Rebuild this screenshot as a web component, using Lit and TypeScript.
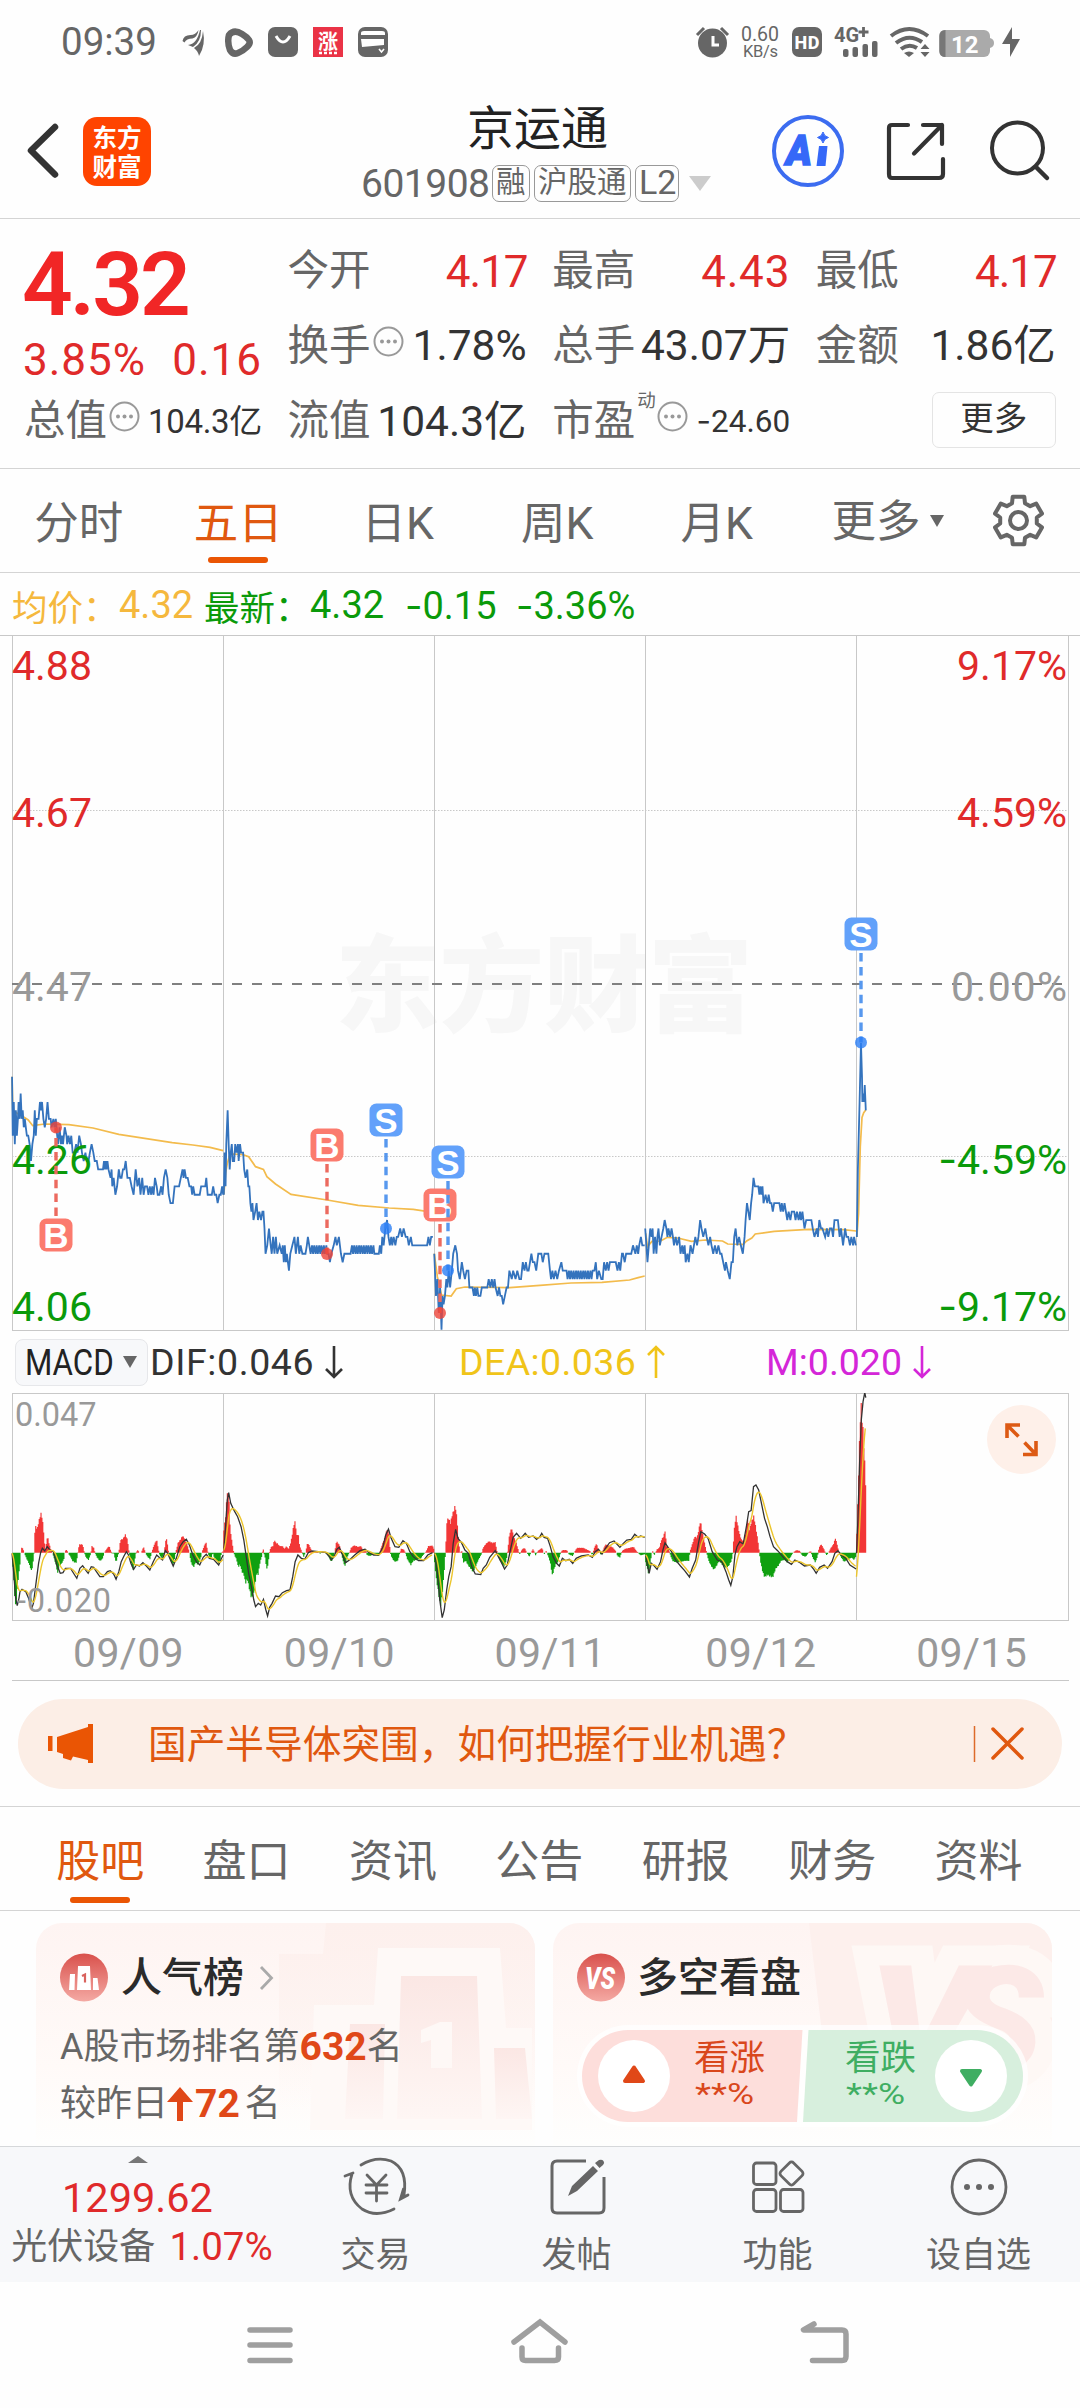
import { LitElement, html, svg, css } from "lit";
import { customElement } from "lit/decorators.js";

type Pt = [number, number];
const pairs = (s: string): Pt[] => s.trim().split(/\s+/).map((p) => p.split(",").map(Number) as Pt);

/* Series are stored on a fine grid: GX units per pixel across, GY units per pixel down. */
const GX = 2.9037;
const GY = 3;
const HALF = 540 * GX;
const join = (left: string, right: string): Pt[] => [
  ...pairs(left),
  ...pairs(right).map(([x, y]) => [x + HALF, y] as Pt),
];
/* alternating ticks between two neighbouring prices */
const osc = (from: number, to: number, lo: number, step = 4) => {
  let out = "";
  for (let x = from, i = 0; x < to; x += i % 3 === 0 ? step : step - 0.8, i++) out += ` ${x.toFixed(1)},${lo + (i % 2)}`;
  return out;
};

/* price in cents per tick, one list for each trading day */
const PRICE: Pt[][] = [
  pairs(`35,436 37,429 40,433 43,428 46,432 49,429 52,431 54,433 57,431 60,434 63,431 66,432 69,430 72,431 75,430 78,429 82,429 86,428 90,426 94,428 98,429 101,432 104,429 107,431 112,431 116,433 119,432 122,433 126,431 130,430 134,431 138,433 142,431 147,431 150,430 155,431 158,430 162,431 166,429 169,428 173,430 177,428 180,429 183,428 188,430 193,429 195,428 199,429 203,428 207,429 211,427 216,427 221,428 225,427 230,429 235,428 238,427 243,426 248,427 252,426 257,426 261,427 266,428 271,427 275,426 281,426 285,425 299,425 302,426 304,425 307,426 309,425 312,426 315,425 321,424 324,425 326,423 330,424 335,422 340,423 345,425 349,424 353,424 357,425 361,425 365,426 370,424 377,424 382,423 388,422 394,425 399,423 404,424 408,422 413,424 417,422 421,423 427,423 431,422 435,423 439,422 442,423 446,422 450,424 455,423 458,422 463,422 468,423 472,422 476,424 481,425 486,424 490,422 495,421 502,421 507,423 520,423 525,424 530,425 533,424 536,425 540,424 545,424 550,423 555,423 558,422 561,423 565,422 580,422 584,423 596,423 599,424 603,422 615,422 619,423 623,422 628,422 632,421 637,422 641,422 645,423 648,422`),
  pairs(`650,422 652,427 655,423 657,428 661,432 664,428 667,425 670,427 673,428 676,426 680,426 683,428 687,427 691,428 693,426 697,428 700,427 706,427 709,425 713,424 718,425 721,423 724,423 727,421 730,420 733,421 736,419 741,420 745,421 749,419 753,420 758,419 762,420 765,420 768,418 771,415 776,416 781,418 786,416 789,415 793,417 797,415 801,417 805,415 812,416 818,415 821,416 824,414 827,416 830,414 833,415 839,413 843,415 849,416 855,417 859,415 865,417 869,415 873,416 878,415 887,415 891,416 894,417 898,416 ${osc(902, 948, 415)} 950,415 954,415 958,414 962,415 969,416 974,417 978,416 984,417 990,415 995,414 1000,415 1015,415 ${osc(1018, 1085, 415)} 1087,415 1100,415 1103,416 1107,415 1110,417 1114,416 1119,418 1124,419 1128,417 1132,416 1136,417 1139,416 1143,417 1148,416 1152,417 1156,417 1162,418 1167,417 1172,418 1178,417 1183,417 1187,416 1193,417 1197,416 1203,416 1240,416 1244,417 1248,416 1252,417 1257,417`),
  join(`1261,415 1266,410 1270,412 1274,408 1278,411 1282,406 1285,410 1288,409 1292,410 1296,412 1299,411 1303,413 1307,411 1312,413 1316,415 1322,416 1327,415 1330,413 1335,412 1341,414 1345,413 1350,412 1355,413 1360,413 1363,411 1372,411 1376,410 1379,411 1382,410 1386,411 1389,410 1395,410 1399,411 1415,411 1419,412 1424,411 1428,412 1432,411 1436,412 1439,411 1445,410 1449,411 1453,410 1457,410 1461,409 1466,410 1471,411 1475,411 1479,413 1486,412 1490,413 1497,412 1502,413 1508,412 1513,412 1518,414 1523,413 1527,414 1531,413 1535,413 1543,415 1547,414 1552,414 1557,413 1563,415`,
    `4,415 8,414 13,415 18,415 24,415 29,413 32,412 36,413 40,412 45,413 50,412 55,413 62,414 66,413 77,413 ${osc(80, 155, 412)} 158,413 162,414 166,412 171,413 178,412 182,412 186,414 191,413 195,414 199,413 203,414 220,414 225,413 229,414 233,413 238,415 241,415 246,414 250,415 265,415 270,416 277,415 281,416 285,415 288,416 293,417 297,416 304,416`),
  join(`${HALF + 305.5},418`,
    `309,416 312,414 316,416 320,418 324,417 327,418 330,415 334,417 338,415 341,417 344,418 348,416 353,417 358,418 362,419 367,418 370,417 373,418 378,417 382,418 386,417 389,416 394,417 398,416 404,417 408,415 413,416 416,415 420,416 423,414 428,415 432,414 437,416 443,415 447,416 451,417 456,416 460,417 465,419 469,418 474,417 480,418 484,417 489,416 494,417 498,416 503,415 508,416 513,415 518,416 523,415 527,415 532,414 537,413 540,414 545,413 551,412 556,414 560,414 564,417 568,418 573,416 578,417 583,416 589,415 594,417 597,419 601,421 605,420 609,419 613,421 616,422 620,424 624,423 634,423 637,422 640,423 643,422 646,423 649,421 655,422 660,421 664,422 668,421 672,421 676,420 680,421 695,421 699,420 702,421 706,420 710,421 714,420 718,419 722,420 727,419 731,420 738,420 742,419 746,420 751,419 755,420 758,419 762,420 765,419 768,418 773,419 788,419 792,418 797,417 804,418 807,417 811,419 816,418 820,418 828,417 833,418 837,417 842,418 847,418 851,417 855,419 865,419 870,417 874,418 880,416 886,418 890,417 895,417 900,416 904,417 909,416 912,417 917,416`),
  join(`${HALF + 920},417`, `923,425 928,433 932,440 935,436 936,433 939,434 941,433 943,435 946,432`),
];

const AVERAGE: Pt[][] = [
  pairs(`35,590 37,690 50,700 70,712 82,720 95,737 130,732 200,734 270,744 345,763 500,788 560,795 610,802 648,812`),
  pairs(`650,943 655,880 660,850 668,822 705,824 722,830 742,860 765,868 775,890 800,912 845,943 950,960 1040,976 1130,984 1200,988 1258,997`),
  join(`1261,1121 1270,1190 1282,1245 1310,1248 1325,1226 1350,1221 1480,1223 1568,1216`, `90,1209 180,1207 260,1200 285,1193 304,1188`),
  join(`${HALF + 307},1060`, `312,1100 325,1084 350,1083 370,1072 400,1074 440,1084 480,1080 530,1083 545,1092 590,1093 600,1083 615,1074 625,1062 680,1054 780,1048 880,1049 918,1053`),
  join(`${HALF + 920},1071`, `925,1000 930,800 935,712 940,698 946,690`),
];

const HIST: Pt[][] = [
  pairs(`35,0 38,-50 42,-120 45,-165 49,-130 53,-80 58,-35 61,8 64,18 68,8 72,-5 78,-20 83,-30 88,-45 92,-58 96,-30 99,0 101,60 103,82 108,72 112,92 116,110 120,122 124,95 128,50 131,0 135,30 138,52 142,30 147,12 152,0 156,-12 162,-35 168,-65 172,-40 178,-35 185,-22 188,0 192,10 197,2 200,-5 205,-12 210,-25 217,-30 222,-30 226,0 230,25 240,25 245,0 250,-15 257,-22 262,-8 264,0 267,20 272,15 276,0 282,-15 290,-25 297,-20 303,0 310,12 317,20 322,5 326,-3 330,0 337,-30 342,-10 345,0 350,40 357,42 364,55 370,40 375,0 380,-25 387,-55 391,-25 395,0 400,8 405,0 410,0 417,18 422,0 428,-12 436,-20 440,0 448,25 455,40 460,10 463,-5 470,-18 476,-5 479,20 483,48 487,20 491,-10 498,-30 504,-35 510,0 517,30 524,40 530,52 537,42 545,20 550,0 555,-30 562,-45 568,-30 575,-38 583,-15 586,0 592,18 598,33 602,10 606,-8 612,-20 618,0 622,-15 628,-20 634,-32 640,-20 643,0 648,5`),
  pairs(`650,70 655,110 660,188 665,170 668,80 672,45 678,5 682,-10 687,-20 692,-45 697,-35 703,-60 708,-65 713,-95 718,-80 724,-110 730,-138 736,-130 740,-110 745,-60 749,-70 755,-30 760,-12 764,15 766,0 770,-15 774,-50 778,-40 782,0 787,18 793,20 797,40 801,30 806,28 812,20 820,20 826,12 832,20 838,10 843,25 848,50 853,85 857,95 862,50 866,60 870,20 876,5 882,-12 887,0 893,30 899,20 905,5 920,5 930,-3 940,3 950,-5 956,-15 962,-28 968,-15 972,0 977,35 981,30 987,20 992,-5 997,-28 1002,-42 1008,-15 1014,0 1020,15 1028,22 1040,18 1048,20 1054,8 1062,8 1066,-8 1075,-10 1090,-3 1098,-12 1104,5 1110,25 1117,45 1124,72 1129,65 1133,0 1138,-15 1146,-28 1155,-25 1160,-5 1165,12 1172,10 1177,0 1183,-20 1193,-38 1200,-25 1210,-22 1220,-20 1230,-5 1238,5 1244,20 1256,22 1260,10`),
  join(`1262,-30 1267,-80 1273,-120 1279,-165 1284,-130 1288,-80 1292,-25 1295,30 1298,100 1303,105 1308,90 1313,115 1318,130 1322,145 1327,105 1332,30 1336,0 1341,5 1345,-30 1353,-25 1360,-40 1368,-50 1374,-60 1382,-40 1390,-20 1398,-5 1403,15 1412,28 1420,35 1430,30 1438,32 1443,5 1448,-15 1456,-30 1464,-42 1470,-25 1474,5 1480,60 1486,75 1491,50 1498,35 1503,15 1509,-5 1516,10 1523,15 1530,0 1537,-12 1542,0 1548,12 1555,-8 1562,5 1568,10`,
    `6,15 12,-5 18,5 24,-10 30,-30 36,-70 41,-50 46,-35 52,-30 60,0 65,8 78,8 84,-5 95,-10 102,5 108,15 125,15 135,10 145,5 152,-8 158,15 164,28 170,8 176,-5 182,5 190,25 200,22 212,15 220,5 225,-10 232,-15 238,5 248,12 262,15 272,18 280,5 292,-8 304,-5`),
  join(`${HALF + 307},-30`, `312,-50 316,-68 322,-20 326,8 332,-8 340,10 347,15 353,40 359,50 363,68 368,20 373,15 378,-5 385,-25 395,-30 410,-28 420,-25 432,-25 436,5 442,25 450,50 456,45 461,70 466,98 472,60 478,30 484,0 490,-25 497,-40 505,-52 513,-40 520,-25 528,-35 537,-45 547,-42 556,-25 560,0 564,70 569,115 574,85 580,55 585,40 592,35 598,70 603,105 608,70 614,95 621,112 627,75 633,35 637,0 641,-30 646,-55 652,-75 660,-68 668,-72 676,-75 684,-50 692,-40 700,-25 710,-22 718,-30 726,-15 735,0 745,8 755,5 762,-10 772,-12 780,0 786,5 792,-15 800,-30 806,-10 811,18 817,25 824,12 832,-8 838,0 845,15 852,25 858,45 864,20 868,0 875,-15 883,-28 895,-20 905,-15 912,-22 918,-10`),
  join(`${HALF + 920},60`, `923,160 926,280 929,380 932,460 936,400 938,375 942,300 946,200`),
];

const DIF: Pt[][] = [
  pairs(`35,700 40,760 45,830 50,857 55,835 58,815 64,808 75,815 83,835 92,866 97,850 102,810 107,770 112,730 118,698 123,685 130,693 137,680 145,690 155,695 165,735 175,760 183,758 190,745 205,745 215,762 223,775 232,745 240,737 250,752 256,760 265,740 272,742 280,755 290,770 300,770 312,755 320,752 330,762 337,778 345,755 352,725 360,708 367,695 373,705 380,730 388,748 396,735 405,738 415,728 425,738 435,750 445,725 455,705 465,715 472,720 480,692 487,700 495,720 503,738 512,715 522,680 532,665 541,658 550,675 560,705 570,725 580,735 590,712 599,703 608,715 620,718 635,735 640,722 648,705`),
  pairs(`650,690 655,620 660,540 664,518 670,550 680,572 690,590 700,620 708,660 715,710 722,760 730,800 737,840 742,860 750,850 757,855 765,838 772,870 777,888 783,862 790,850 800,828 810,830 820,818 832,812 842,810 850,770 857,725 865,705 875,715 885,718 895,698 905,693 925,695 945,697 955,708 962,720 970,710 978,688 985,682 995,705 1003,728 1015,720 1030,705 1045,692 1060,688 1070,697 1085,705 1100,705 1112,680 1120,645 1128,627 1136,655 1147,680 1158,682 1170,662 1180,670 1190,695 1200,710 1215,722 1230,722 1242,705 1256,698`),
  join(`1262,700 1270,760 1277,840 1284,893 1290,870 1297,810 1303,770 1310,740 1316,670 1323,628 1330,655 1340,668 1350,690 1360,700 1370,740 1380,762 1396,764 1403,745 1412,735 1422,712 1438,692 1447,710 1458,732 1465,747 1473,735 1482,690 1490,652 1500,640 1512,655 1525,640 1535,652 1548,648 1558,658 1568,650`,
    `5,640 12,652 22,655 30,680 38,710 48,730 56,738 65,715 75,722 85,718 95,730 105,715 120,708 140,705 152,712 160,695 170,688 180,702 190,685 202,668 215,663 232,682 242,670 252,660 265,658 275,643 285,652 292,648 304,652`),
  join(`${HALF + 307},705`, `312,735 317,760 323,730 332,738 340,748 350,725 357,690 363,668 372,682 382,695 395,722 408,738 420,752 434,771 442,745 452,720 460,670 467,635 478,642 488,655 500,695 515,720 528,725 540,755 548,780 554,796 560,770 566,705 572,680 580,665 590,672 600,615 606,575 613,572 620,500 627,495 635,510 642,545 652,595 660,620 668,650 678,680 690,692 705,710 718,725 730,733 740,720 755,728 768,738 785,735 795,748 802,760 812,742 825,735 835,745 848,725 856,700 865,692 875,705 888,715 900,735 918,747`),
  join(`${HALF + 919},700`, `923,600 928,430 933,300 938,245 943,218 946,233`),
];

const MINUTE = 2.55;
const sample = (pts: Pt[]): Pt[] => {
  const out: Pt[] = [];
  let i = 0;
  for (let x = pts[0][0]; x <= pts[pts.length - 1][0]; x += MINUTE) {
    while (i < pts.length - 2 && pts[i + 1][0] < x) i++;
    const [x0, y0] = pts[i];
    const [x1, y1] = pts[i + 1];
    out.push([x, y0 + ((y1 - y0) * (x - x0)) / (x1 - x0 || 1)]);
  }
  return out;
};
const ZERO = 698;
const deaOf = (pts: Pt[], start: number): Pt[] => {
  let v = start;
  return sample(pts).map(([x, y]) => {
    v += (y - v) * 0.22;
    return [x, v] as Pt;
  });
};
const poly = (pts: Pt[]) => pts.map(([x, y]) => `${x.toFixed(1)},${y.toFixed(1)}`).join(" ");
const bars = (pts: Pt[], up: boolean) =>
  sample(pts)
    .map(([x, v], i) => [x, v * (i % 2 ? 1 : 0.95)] as Pt)
    .filter(([, v]) => (up ? v > 1 : v < -1))
    .map(([x, v]) => `M${x.toFixed(1)} ${ZERO}V${(ZERO - v).toFixed(1)}`)
    .join("");

const VLINES = [12.5, 223.5, 434.5, 645.5, 856.5, 1068.5];

@customElement("price-chart")
class PriceChart extends LitElement {
  static styles = css`
    :host { display: block; height: 696px; }
    svg { display: block; font-family: Roboto, "Noto Sans CJK SC", sans-serif; }
    .ax { font-size: 41px; }
    .neg { font-family: Inter, sans-serif; }
    .up { fill: #e02a2a; } .down { fill: #0a9a0a; } .flat { fill: #999; }
    .wm { font-family: "Noto Sans CJK SC", sans-serif; font-weight: 900; font-size: 105px; fill: #f7f7f7; }
    .tag { font-weight: 700; font-size: 35px; fill: #fff; text-anchor: middle; font-family: "Liberation Sans", sans-serif; }
    .grid { stroke: #c8c8c8; stroke-width: 1; fill: none; }
    .px { fill: none; stroke: #3473bd; stroke-width: 1.8; stroke-linejoin: miter; vector-effect: non-scaling-stroke; }
    .avg { fill: none; stroke: #f3bb4c; stroke-width: 1.7; vector-effect: non-scaling-stroke; }
  `;
  private mark(kind: "B" | "S", x: number, boxY: number, dotY: number) {
    const b = kind === "B";
    const box = b ? "#fb7b6e" : "#62a1fa";
    const line = b ? "#ec6a5f" : "#5798ee";
    const dot = b ? "#ee4438" : "#2a7ef5";
    const above = boxY < dotY;
    return svg`
      <line x1=${x} x2=${x} y1=${above ? boxY + 19 : boxY - 19} y2=${dotY} stroke=${line} stroke-width="3.4" stroke-dasharray="8.5 5.4"></line>
      <circle cx=${x} cy=${dotY} r="6" fill=${dot} fill-opacity=".8"></circle>
      <rect x=${x - 16.5} y=${boxY - 16.5} width="33" height="33" rx="7" fill=${box}></rect>
      <text class="tag" x=${x} y=${boxY + 12.5}>${kind}</text>`;
  }
  render() {
    const toY = (c: number) => 590 + (436 - c) * 25.3;
    return html`<svg width="1080" height="696" viewBox="0 635 1080 696">
      <text class="wm" x="335" y="1023" textLength="418">东方财富</text>
      ${VLINES.map((x) => svg`<path class="grid" d="M${x} 635V1331"></path>`)}
      <path class="grid" d="M0 635.5H1080M12 1330.5H1069"></path>
      <path class="grid" stroke-dasharray="1.5 1.5" d="M12 810.5H1068M12 1156.5H1068"></path>
      <path d="M12 984H1068" stroke="#808080" stroke-width="1.8" stroke-dasharray="10 10"></path>
      <g transform=${`translate(0 880) scale(${1 / GX} ${1 / GY})`}>
        ${AVERAGE.map((a) => svg`<polyline class="avg" points=${poly(a)}></polyline>`)}
        ${PRICE.map((d) => svg`<polyline class="px" points=${poly(d.map(([x, c]) => [x, toY(c)] as Pt))}></polyline>`)}
      </g>
      <g class="ax">
        <text class="up" x="12" y="680">4.88</text><text class="up" x="1067" y="680" text-anchor="end">9.17%</text>
        <text class="up" x="12" y="827">4.67</text><text class="up" x="1067" y="827" text-anchor="end">4.59%</text>
        <text class="flat" x="12" y="1000.5">4.47</text><text class="flat" x="1067" y="1000.5" text-anchor="end" textLength="116">0.00%</text>
        <text class="down" x="12" y="1174">4.26</text><text class="down" x="1067" y="1174" text-anchor="end"><tspan class="neg">-</tspan>4.59%</text>
        <text class="down" x="12" y="1320.5">4.06</text><text class="down" x="1067" y="1320.5" text-anchor="end"><tspan class="neg">-</tspan>9.17%</text>
      </g>
      ${this.mark("B", 56, 1235, 1127.5)}
      ${this.mark("B", 327, 1145, 1254)}
      ${this.mark("S", 386, 1120, 1228.5)}
      ${this.mark("B", 440, 1205, 1313)}
      ${this.mark("S", 448, 1162, 1270.5)}
      ${this.mark("S", 861, 934, 1042.5)}
    </svg>`;
  }
}

@customElement("macd-chart")
class MacdChart extends LitElement {
  static styles = css`
    :host { display: block; height: 228px; }
    svg { display: block; font-family: Roboto, sans-serif; }
    text { font-size: 32.5px; fill: #999; }
    .grid { stroke: #c8c8c8; stroke-width: 1; fill: none; }
    .r { stroke: #f23636; stroke-width: 3.4; }
    .g { stroke: #10a010; stroke-width: 3.4; }
    .dif { fill: none; stroke: #333; stroke-width: 1.3; vector-effect: non-scaling-stroke; }
    .dea { fill: none; stroke: #ecc52c; stroke-width: 1.4; vector-effect: non-scaling-stroke; }
  `;
  render() {
    return html`<svg width="1080" height="228" viewBox="0 1393 1080 228">
      ${VLINES.map((x) => svg`<path class="grid" d="M${x} 1393V1621"></path>`)}
      <path class="grid" d="M12 1393.5H1069M12 1620.5H1069"></path>
      <g transform=${`translate(0 1320) scale(${1 / GX} ${1 / GY})`}>
        ${HIST.map((h) => svg`<path class="r" d=${bars(h, true)}></path><path class="g" d=${bars(h, false)}></path>`)}
        ${DIF.map((d) => svg`<polyline class="dif" points=${poly(d)}></polyline>`)}
        ${DIF.map((d, i) => svg`<polyline class="dea" points=${poly(deaOf(d, i === 4 ? 790 : d[0][1]))}></polyline>`)}
      </g>
      <text x="15" y="1425.5">0.047</text>
      <text x="17" y="1611.5" textLength="94">-0.020</text>
      <circle cx="1021.5" cy="1439.5" r="34.5" fill="#fef0e9"></circle>
      <path d="M1007 1438V1425H1020M1007.500 1425.500 1018.500 1436.500M1036 1441V1454.500H1023M1036 1454.500 1024.500 1442.500" fill="none" stroke="#dd5a14" stroke-width="3.6"></path>
    </svg>`;
  }
}

/* icon whose viewBox uses screen coordinates */
const ico = (cls: string, x: number, y: number, w: number, h: number, body: unknown) =>
  html`<svg class=${cls} width=${w} height=${h} viewBox="${x} ${y} ${w} ${h}">${body}</svg>`;
const dots = () => html`<svg class="dots" width="31" height="31" viewBox="0 0 31 31"><circle cx="15.500" cy="15.500" r="14" fill="none" stroke="#999" stroke-width="2"></circle><g fill="#999"><circle cx="9" cy="15.500" r="2"></circle><circle cx="15.500" cy="15.500" r="2"></circle><circle cx="22" cy="15.500" r="2"></circle></g></svg>`;

const gear = () => {
  const cx = 1018.5, cy = 520.5;
  const p: string[] = [];
  for (let k = 0; k < 6; k++) {
    const a = (k * 60 - 90) * (Math.PI / 180);
    for (const [da, r] of [[-0.36, 18.5], [-0.24, 24.5], [0.24, 24.5], [0.36, 18.5]] as Pt[])
      p.push(`${(cx + r * Math.cos(a + da)).toFixed(1)} ${(cy + r * Math.sin(a + da)).toFixed(1)}`);
  }
  return ico("", 990, 492, 57, 57, svg`<path d=${"M" + p.join("L") + "Z"} fill="none" stroke="#666" stroke-width="4" stroke-linejoin="round"></path><circle cx=${cx} cy=${cy} r="8.500" fill="none" stroke="#666" stroke-width="4"></circle>`);
};

@customElement("app-root")
class AppRoot extends LitElement {
  static styles = css`
    :host { display: block; width: 1080px; height: 2408px; overflow: hidden; background: #fefefe; color: #333; font-family: Roboto, "Noto Sans CJK SC", sans-serif; }
    * { box-sizing: border-box; }
    svg { display: block; flex: none; }
    .row { display: flex; align-items: center; white-space: nowrap; }
    .red { color: #e02a2a; } .grey { color: #666; }
    .neg { font-family: Inter, sans-serif; }

    .status { height: 84px; padding: 0 0 0 61px; color: #666; }
    .time { font-size: 38.5px; line-height: 44px; width: 121px; }
    .si { margin-right: 14px; }
    .sr { margin-left: auto; margin-right: 58px; }

    .head { height: 135px; border-bottom: 1px solid #d4d4d4; }
    .back { margin-left: 24px; }
    .logo { width: 68px; height: 69px; margin-left: 21px; border-radius: 14px; background: #ff4400; color: #fff; display: grid; place-content: center; text-align: center; font: 700 24.500px/29px "Noto Sans CJK SC", sans-serif; }
    .center { flex: 1; display: flex; flex-direction: column; padding: 5px 0 0 210px; }
    .name { font-size: 47px; line-height: 56px; color: #222; padding-left: 106px; margin-top: -1px; }
    .code { height: 44px; margin-top: 5px; color: #666; }
    .num { font-size: 39px; line-height: 44px; width: 131px; letter-spacing: -0.5px; }
    .tag { height: 37px; border: 1.5px solid #999; border-radius: 7px; font-size: 29.5px; line-height: 33px; margin-right: 4.500px; padding: 0 3px; }
    .tag.l2 { font-size: 34px; padding: 0 2px 0 3px; }
    .tri { width: 0; height: 0; border: 11px solid transparent; border-top: 15px solid #ccc; border-bottom: 0; margin-left: 5px; }
    .acts { gap: 35px; margin-right: 26px; height: 135px; }

    .quote { height: 250px; border-bottom: 1px solid #d4d4d4; padding: 15px 24px 0 25px; display: grid; grid-template-columns: 237px 238px 237px 239px; column-gap: 26.6px; grid-template-rows: 74px 75px 76px; }
    .q { display: flex; align-items: center; justify-content: space-between; white-space: nowrap; }
    .lab { font-size: 41.500px; color: #666; display: flex; align-items: center; line-height: 60px; margin-left: -1px; }
    .dots { margin: -9px 0 0 2px; }
    .v { font-size: 44px; line-height: 60px; padding-top: 1px; }
    .v.k { letter-spacing: -1px; margin-right: -1px; }
    .v.w { letter-spacing: .8px; }
    .v.m { font-size: 42.500px; }
    .v.s { font-size: 33px; letter-spacing: -.3px; } .v.xs { font-size: 31.500px; }
    .big { grid-row: span 2; }
    .price { font-size: 89px; font-weight: 600; line-height: 90px; color: #f12626; margin: 6px 0 0 -3px; letter-spacing: -3px; }
    .chg { display: flex; justify-content: space-between; font-size: 44px; line-height: 50px; margin: 5px 0 0 -2px; letter-spacing: 1px; }
    .sup { font-size: 18.500px; line-height: 20px; margin: -40px 0 0 2px; width: 18px; }
    .more { width: 124px; height: 56px; border: 1.500px solid #e4e4e4; border-radius: 7px; font-size: 33.500px; line-height: 51px; text-align: center; margin: -3px 0 0 auto; }

    .ptabs { height: 104px; border-bottom: 1px solid #d4d4d4; font-size: 44.500px; color: #666; }
    .pt { width: 159.500px; height: 103px; display: flex; flex-direction: column; align-items: center; justify-content: flex-end; }
    .pt span { line-height: 60px; }
    .bar { width: 60px; height: 6px; border-radius: 3px; margin: 3px 0 9px; }
    .on { color: #e0580f; } .on .bar { background: #ea5504; }
    .ptabs .pt { margin-left: -1px; margin-right: 1px; }
    .pmore { margin-left: 34px; line-height: 60px; padding-top: 2px; }
    .t2 { width: 0; height: 0; border: 7.500px solid transparent; border-top: 12px solid #666; border-bottom: 0; margin: 0 46px 0 9px; }

    .legend { height: 62px; padding: 2px 0 0 12px; font-size: 38px; color: #0a9a0a; }
    .legend i { font-style: normal; font-size: 35.500px; }
    .avgc { color: #f5b83d; }

    .mrow { height: 62px; padding-left: 15px; font-size: 37.500px; }
    .mbtn { width: 133px; height: 47px; border: 1.500px solid #e6e7ea; border-radius: 8px; background: #f7f8fa; padding-left: 9px; display: flex; align-items: center; color: #222; }
    .mbtn span { transform: scaleX(.835); transform-origin: 0 50%; width: 98px; }
    .t3 { border: 7.500px solid transparent; border-top: 12px solid #666; border-bottom: 0; }
    .dates { height: 60px; margin: 0 11px 0 12px; padding-left: 11px; border-bottom: 1px solid #c8c8c8; display: grid; grid-template-columns: repeat(5, 210.800px); font-size: 41px; line-height: 64px; color: #999; letter-spacing: .4px; }
    .dates span { width: 211px; text-align: center; }

    .banner { height: 90px; margin: 18px 18px 17px; border-radius: 45px; background: #fceee6; color: #e0580f; font-size: 38.700px; }
    .btext { margin-left: 52px; width: 822px; line-height: 56px; padding-top: 1px; }
    .dtabs { height: 105px; padding: 0 27px; border-top: 1px solid #d4d4d4; border-bottom: 1px solid #d4d4d4; font-size: 44px; color: #666; }
    .dtabs .pt { width: 146.400px; }
    .dtabs .bar { margin: 5px 0 7px; }

    .cards { height: 235px; padding: 12px 28px 0 36px; display: flex; gap: 18px; overflow: hidden; }
    .card { width: 499px; height: 260px; border-radius: 26px; background: linear-gradient(#fef4f2, #fffaf8 55%, #fefefd 85%); position: relative; overflow: hidden; }
    .deco { position: absolute; inset: 0; }
    .cin { position: relative; padding: 26px 24px 0; }
    .ct { font-size: 41px; font-weight: 500; color: #2b2b2b; margin-left: 13px; line-height: 56px; padding-top: 1px; }
    .ln { font-size: 36px; line-height: 50px; height: 50px; color: #666; }
    .ln b { color: #e04818; font-size: 39px; }
    .pill { margin: 18px 0 0 -1px; }
    .pill text { font-size: 35.500px; }

    .foot { height: 136px; background: #f7f8fa; border-top: 1px solid #d6d8da; display: grid; grid-template-columns: 275px repeat(4, 201px); }
    .idx { display: flex; flex-direction: column; align-items: center; }
    .up3 { border: 10.500px solid transparent; border-bottom: 7px solid #777; border-top: 0; margin-top: 9px; }
    .i1 { font-size: 41.500px; line-height: 48px; margin-top: 11px; }
    .i2 { font-size: 36px; line-height: 50px; color: #666; display: flex; align-items: center; gap: 14px; margin-left: 9px; }
    .i2 b { font-weight: 400; font-size: 38.500px; }
    .fi { display: flex; flex-direction: column; align-items: center; color: #666; font-size: 35px; line-height: 50px; }
    .fi svg { margin: 7px 0 11px; }
    .nav { height: 126px; }
  `;

  render() {
    const tab = (t: string, on = false) => html`<div class="pt ${on ? "on" : ""}"><span>${t}</span><div class="bar"></div></div>`;
    const neg = html`<span class="neg">-</span>`;
    const arrow = (up: boolean, c: string, ml: number) =>
      html`<svg width="20" height="34" viewBox="0 0 20 34" style="margin-left:${ml}px"><path d=${up ? "M10 33V2M2 10 10 2 18 10" : "M10 1V32M2 24 10 32 18 24"} fill="none" stroke=${c} stroke-width="2.600"></path></svg>`;
    return html`
      <div class="status row">
        <span class="time">09:39</span>
        ${ico("si", 182, 26, 28, 32, svg`<path fill="#666" d="M182.500 41q1-6 8-6 5 0 8-5-1 7-6 8.500-6 0-8 4zM188 45q9-1 12-15h1q0 12-8 17zM199 56q-1-5-5-8 8-4 9-17 3 14-4 25z"></path>`)}
        ${ico("si", 223, 26, 30, 32, svg`<path fill="none" stroke="#666" stroke-width="6.500" stroke-linejoin="round" d="M228 35q5-6 13-1 5 3 7 6 2 3-2 7-4 4-9 6-5 2-8-3-3-8-1-15z"></path>`)}
        ${ico("si", 268, 26, 31, 32, svg`<rect x="268" y="27" width="30" height="30" rx="7" fill="#666"></rect><path d="M276 36q7 12 14 0" fill="none" stroke="#fff" stroke-width="3"></path>`)}
        ${ico("si", 313, 26, 31, 32, svg`<rect x="313" y="27" width="30" height="30" fill="#ea3346"></rect><text x="318" y="49" font-size="20" font-weight="700" fill="#fff">涨</text><path d="M319 53H338" stroke="#fff" stroke-width="2.500" stroke-dasharray="3 2"></path>`)}
        ${ico("si", 358, 26, 31, 32, svg`<rect x="358" y="27" width="30" height="30" rx="7" fill="#666"></rect><path fill="#fff" d="M361 35v-2q0-2 3-2h18q3 0 3 2v2zM361 39h23v6l-22 2z"></path><path d="M379 49l2.500 3 2.500-3" fill="none" stroke="#fff" stroke-width="1.600"></path>`)}
        ${ico("sr", 695, 24, 327, 36, svg`
          <g fill="#666"><circle cx="712.500" cy="43" r="14.500"></circle><path d="M697 35l7-7M728 35l-7-7" stroke="#666" stroke-width="3"></path><path d="M713 36v9h6" stroke="#fff" stroke-width="3" fill="none"></path>
          <text x="741" y="41" font-size="19.500" textLength="38">0.60</text><text x="743" y="57" font-size="16.500" textLength="35">KB/s</text>
          <rect x="792" y="27" width="30" height="30" rx="7"></rect><text x="794.500" y="49" font-size="18" font-weight="800" fill="#fff" textLength="25">HD</text>
          <text x="834" y="42" font-size="20" font-weight="700">4G</text><path d="M863.500 27v10M858.500 32h10" stroke="#666" stroke-width="2.800"></path>
          <rect x="843" y="49" width="5.500" height="8" rx="2"></rect><rect x="852.500" y="47" width="5.500" height="10" rx="2"></rect><rect x="862.500" y="44" width="5.500" height="13" rx="2"></rect><rect x="872" y="41" width="5.500" height="16" rx="2"></rect>
          <path d="M904 53q5-3 10 0l-5 4zM925 44l4.500 5h-9zM925 57l4.500-5h-9z"></path></g>
          <path d="M891 36Q909 22 928 36M896 43Q909 33 922 42M901 49Q909 43 917 48" fill="none" stroke="#666" stroke-width="4"></path>
          <rect x="939" y="30" width="51" height="27" rx="6" fill="#aaa"></rect><path d="M990 38q4 1 4 5t-4 5z" fill="#aaa"></path><path d="M945.500 30v27q-6 0-6-6v-15q0-6 6-6z" fill="#777"></path>
          <text x="951" y="52.500" font-size="24" font-weight="700" fill="#fff">12</text>
          <path d="M1012 27l-10 17h8v13l10-18h-8z" fill="#666"></path>`)}
      </div>

      <div class="head row">
        ${ico("back", 24, 122, 38, 60, svg`<path d="M55 128 31 151.500 55 175.500" fill="none" stroke="#333" stroke-width="6.500" stroke-linecap="round" stroke-linejoin="round"></path>`)}
        <div class="logo"><span>东方</span><span>财富</span></div>
        <div class="center">
          <div class="name">京运通</div>
          <div class="code row"><span class="num">601908</span><span class="tag">融</span><span class="tag">沪股通</span><span class="tag l2">L2</span><i class="tri"></i></div>
        </div>
        <div class="acts row">
          ${ico("", 772, 114, 74, 74, svg`<circle cx="809" cy="151" r="34" fill="none" stroke="#3c6cf0" stroke-width="4"></circle><text x="787" y="165" font-size="42" font-weight="900" font-style="italic" fill="#3568f8" stroke="#3568f8" stroke-width="1.500" textLength="26" lengthAdjust="spacingAndGlyphs">A</text><path d="M820 146h8.500l-2 20h-9z" fill="#3568f8"></path><path d="M824 132q1 4.500 5.500 5.500-4.500 1-5.500 5.500-1-4.500-5.500-5.500 4.500-1 5.500-5.500z" fill="#3568f8" stroke="#3568f8"></path>`)}
          ${ico("", 881, 117, 70, 68, svg`<path d="M909 125H893q-3 0-3 3V174q0 4 3 4H940q4 0 4-4V159M924 125H943V144M943 125 915 153.500" fill="none" stroke="#333" stroke-width="4.200" stroke-linecap="round" stroke-linejoin="round"></path>`)}
          ${ico("", 986, 117, 69, 68, svg`<circle cx="1018.500" cy="148" r="25.500" fill="none" stroke="#333" stroke-width="4"></circle><path d="M1037 167l11 11" stroke="#333" stroke-width="4.500" stroke-linecap="round"></path>`)}
        </div>
      </div>

      <div class="quote">
        <div class="big"><div class="price">4.32</div><div class="chg red"><span>3.85%</span><span>0.16</span></div></div>
        <div class="q"><span class="lab">今开</span><span class="v k red">4.17</span></div>
        <div class="q"><span class="lab">最高</span><span class="v w red">4.43</span></div>
        <div class="q"><span class="lab">最低</span><span class="v k red">4.17</span></div>
        <div class="q"><span class="lab">换手${dots()}</span><span class="v m">1.78%</span></div>
        <div class="q"><span class="lab">总手</span><span class="v m">43.07万</span></div>
        <div class="q"><span class="lab">金额</span><span class="v m">1.86亿</span></div>
        <div class="q"><span class="lab">总值${dots()}</span><span class="v s">104.3亿</span></div>
        <div class="q"><span class="lab">流值</span><span class="v m">104.3亿</span></div>
        <div class="q"><span class="lab">市盈<span class="sup">动</span>${dots()}</span><span class="v xs">${neg}24.60</span></div>
        <div class="q"><span class="more">更多</span></div>
      </div>

      <div class="ptabs row">${tab("分时")}${tab("五日", true)}${tab("日K")}${tab("周K")}${tab("月K")}<span class="pmore">更多</span><i class="t2"></i>${gear()}</div>
      <div class="legend row">
        <i class="avgc" style="width:107px">均价：</i><span class="avgc" style="width:85px">4.32</span>
        <i style="width:106px">最新：</i><span style="width:95px">4.32</span><span style="width:111px">${neg}0.15</span><span>${neg}3.36%</span>
      </div>
      <price-chart></price-chart>
      <div class="mrow row">
        <div class="mbtn"><span>MACD</span><i class="t3"></i></div>
        <span style="margin-left:2px;width:166px;letter-spacing:.6px">DIF:0.046</span>${arrow(false, "#333", 8)}
        <span style="margin-left:115px;width:179px;color:#f0c419;letter-spacing:.4px">DEA:0.036</span>${arrow(true, "#f0c419", 8)}
        <span style="margin-left:100px;width:138px;color:#d426d8">M:0.020</span>${arrow(false, "#d426d8", 8)}
      </div>
      <macd-chart></macd-chart>
      <div class="dates"><span>09/09</span><span>09/10</span><span>09/11</span><span>09/12</span><span>09/15</span></div>

      <div class="banner row">
        ${ico("mega", 18, 1720, 78, 48, svg`<path fill="#ea5504" d="M48 1736h4.500v15H48zM57 1737l31-10v-3h5v39h-5v-3l-15-3.500-2 4-8-2.500v-4l-6-2z"></path>`)}
        <span class="btext">国产半导体突围，如何把握行业机遇？</span>
        ${ico("", 970, 1720, 60, 48, svg`<path d="M974.500 1726v36" stroke="#dd6a2a" stroke-width="1.500"></path><path d="M993 1729l29 29M1022 1729l-29 29" stroke="#e0580f" stroke-width="3.500" stroke-linecap="round"></path>`)}
      </div>

      <div class="dtabs row">${tab("股吧", true)}${tab("盘口")}${tab("资讯")}${tab("公告")}${tab("研报")}${tab("财务")}${tab("资料")}</div>

      <div class="cards">
        <div class="card">
          ${ico("deco", 36, 1923, 499, 260, svg`
            <defs><linearGradient id="fa" x1="0" y1="0" x2="0" y2="1"><stop offset="0" stop-color="#fbe7e4"></stop><stop offset="1" stop-color="#fef6f4"></stop></linearGradient>
            <linearGradient id="fo" gradientUnits="userSpaceOnUse" x1="0" y1="1923" x2="0" y2="2110"><stop offset="0" stop-color="#fdf0ed"></stop><stop offset="1" stop-color="#fdf0ed" stop-opacity="0"></stop></linearGradient></defs>
            <path d="M326 1923H535V2130H279V1954H323z" fill="url(#fo)"></path>
            <path d="M378 1948H500L506 2028H532V2130H310L314 2005H374z" fill="#fef9f7"></path>
            <g fill="url(#fa)"><path d="M401 1976H477L482 2119H397z"></path><path d="M350 2024H385L383 2119H345z"></path><path d="M494 2048H525L532 2119H496z"></path></g>
            <path d="M421 2030 440 2022H452V2068H431V2040L421 2043z" fill="#fef8f6"></path>`)}
          <div class="cin">
            <div class="row">
              ${ico("", 60, 1952, 48, 49, svg`<defs><linearGradient id="g1" x1="0" y1="0" x2="0" y2="1"><stop offset="0" stop-color="#d9514c"></stop><stop offset="1" stop-color="#f4a9a3"></stop></linearGradient></defs><circle cx="84" cy="1976.500" r="24" fill="url(#g1)"></circle><path fill="#fff" d="M78 1965h12l1 24H77zM70 1973h5l-.5 16H69zM93 1977h4.500l1.500 12h-6z"></path><path d="M82 1975l3-1.500v8" fill="none" stroke="#d9625d" stroke-width="2.200"></path>`)}
              <span class="ct">人气榜</span>
              <svg width="16" height="26" viewBox="0 0 16 26" style="margin-left:15px"><path d="M2 2l10.500 11L2 24" fill="none" stroke="#aaa" stroke-width="2.800"></path></svg>
            </div>
            <div class="ln row" style="margin-top:16px">A股市场排名第<b>632</b>名</div>
            <div class="ln row" style="margin-top:7px">较昨日<svg width="26" height="34" viewBox="0 0 26 34" style="margin-left:-1px"><path d="M13 0 26 15H16V34H10V15H0z" fill="#e04818"></path></svg><b style="margin:0 5px 0 2px">72</b>名</div>
          </div>
        </div>
        <div class="card">
          ${ico("deco", 553, 1923, 499, 260, svg`
            <path d="M809 1923H1052V2050H824z" fill="#fdf0ed"></path>
            <g font-size="148" font-weight="900" font-style="italic">
              <g fill="#fef8f5" stroke="#fef8f5" stroke-width="40"><text x="868" y="2071" textLength="112" lengthAdjust="spacingAndGlyphs">V</text><text x="951" y="2071" textLength="92" lengthAdjust="spacingAndGlyphs">S</text></g>
              <g fill="#fce9e7"><text x="868" y="2071" textLength="112" lengthAdjust="spacingAndGlyphs">V</text><text x="951" y="2071" textLength="92" lengthAdjust="spacingAndGlyphs">S</text></g>
            </g>`)}
          <div class="cin">
            <div class="row">
              ${ico("", 577, 1952, 48, 49, svg`<circle cx="601" cy="1976.500" r="24" fill="url(#g2)"></circle><defs><linearGradient id="g2" x1="0" y1="0" x2="0" y2="1"><stop offset="0" stop-color="#d9514c"></stop><stop offset="1" stop-color="#f4a9a3"></stop></linearGradient></defs><text x="585" y="1988" font-size="32" font-weight="900" font-style="italic" fill="#fff" textLength="30" lengthAdjust="spacingAndGlyphs">VS</text>`)}
              <span class="ct" style="margin-left:12px">多空看盘</span>
            </div>
            ${ico("pill", 576, 2024, 454, 104, svg`
              <rect x="577" y="2025" width="451" height="102" rx="51" fill="#fff" opacity=".75"></rect>
              <path d="M628 2030H802.500L797 2122H628A46 46 0 0 1 628 2030z" fill="#fddedb"></path>
              <path d="M808.500 2030H977A46 46 0 0 1 977 2122H803z" fill="#d7efdd"></path>
              <circle cx="634" cy="2076" r="36" fill="#fff"></circle><circle cx="971" cy="2076" r="36" fill="#fff"></circle>
              <path d="M634 2067.500 643 2081H625z" fill="#e04818" stroke="#e04818" stroke-width="4" stroke-linejoin="round"></path>
              <path d="M971 2084.500 980 2071H962z" fill="#3fae62" stroke="#3fae62" stroke-width="4" stroke-linejoin="round"></path>
              <g fill="#d9471c"><text x="694" y="2070">看涨</text><text x="695" y="2103.500" style="font-size:30px" textLength="59" lengthAdjust="spacingAndGlyphs">**%</text></g>
              <g fill="#3fae62"><text x="845" y="2070">看跌</text><text x="846" y="2103.500" style="font-size:30px" textLength="59" lengthAdjust="spacingAndGlyphs">**%</text></g>`)}
          </div>
        </div>
      </div>

      <div class="foot">
        <div class="idx"><i class="up3"></i><div class="i1 red">1299.62</div><div class="i2">光伏设备<b class="red">1.07%</b></div></div>
        <div class="fi">${ico("", 341, 2153, 68, 66, svg`<g fill="none" stroke="#666" stroke-width="2.800" stroke-linecap="round"><path d="M360 2164Q375 2155 390 2160 407 2168 403 2194M393 2208Q375 2217 361 2208 344 2195 351 2173M344 2175l8-3M407 2194l-7.500 4 3-10"></path><path d="M366 2174l9.500 10 9.500-10M365 2184h21M365 2192h21M375.500 2184v16"></path></g>`)}<span>交易</span></div>
        <div class="fi">${ico("", 544, 2153, 66, 66, svg`<path d="M586 2160H557q-5 0-5 5v42q0 5 5 5h42q5 0 5-5v-31" fill="none" stroke="#666" stroke-width="3"></path><path d="M568 2195l4-10 21-20 5 5-21 20zM595 2162l4-3q3-1 4.500 1t-.5 4l-3.500 3z" fill="#666"></path>`)}<span>发帖</span></div>
        <div class="fi">${ico("", 745, 2153, 66, 66, svg`<g fill="none" stroke="#666" stroke-width="2.800" stroke-linejoin="round"><rect x="753.500" y="2162" width="22.500" height="21.500" rx="3"></rect><rect x="753.500" y="2188.500" width="22.500" height="22" rx="3"></rect><rect x="780.500" y="2188.500" width="22.500" height="22" rx="3"></rect><rect x="782.500" y="2163.500" width="18" height="18" rx="3" transform="rotate(45 791.500 2172.500)"></rect></g>`)}<span>功能</span></div>
        <div class="fi">${ico("", 946, 2153, 66, 66, svg`<circle cx="979" cy="2186" r="27" fill="none" stroke="#666" stroke-width="2.800"></circle><g fill="#666"><circle cx="967" cy="2186" r="3"></circle><circle cx="979" cy="2186" r="3"></circle><circle cx="991" cy="2186" r="3"></circle></g>`)}<span>设自选</span></div>
      </div>
      <div class="nav">${ico("", 0, 2282, 1080, 126, svg`<g fill="none" stroke="#9f9f9f" stroke-width="5.500" stroke-linecap="round"><path d="M250 2330H290M250 2345H290M250 2360.500H290"></path><path d="M514 2342 540 2322 565 2342M522 2348V2357q0 3.500 3.500 3.500H554.500q4 0 4-3.500V2348"></path><path d="M814 2324 803.500 2330H842q4 0 4 4V2356.500q0 4-4 4H812.500" stroke-linejoin="round"></path></g>`)}</div>
    `;
  }
}
